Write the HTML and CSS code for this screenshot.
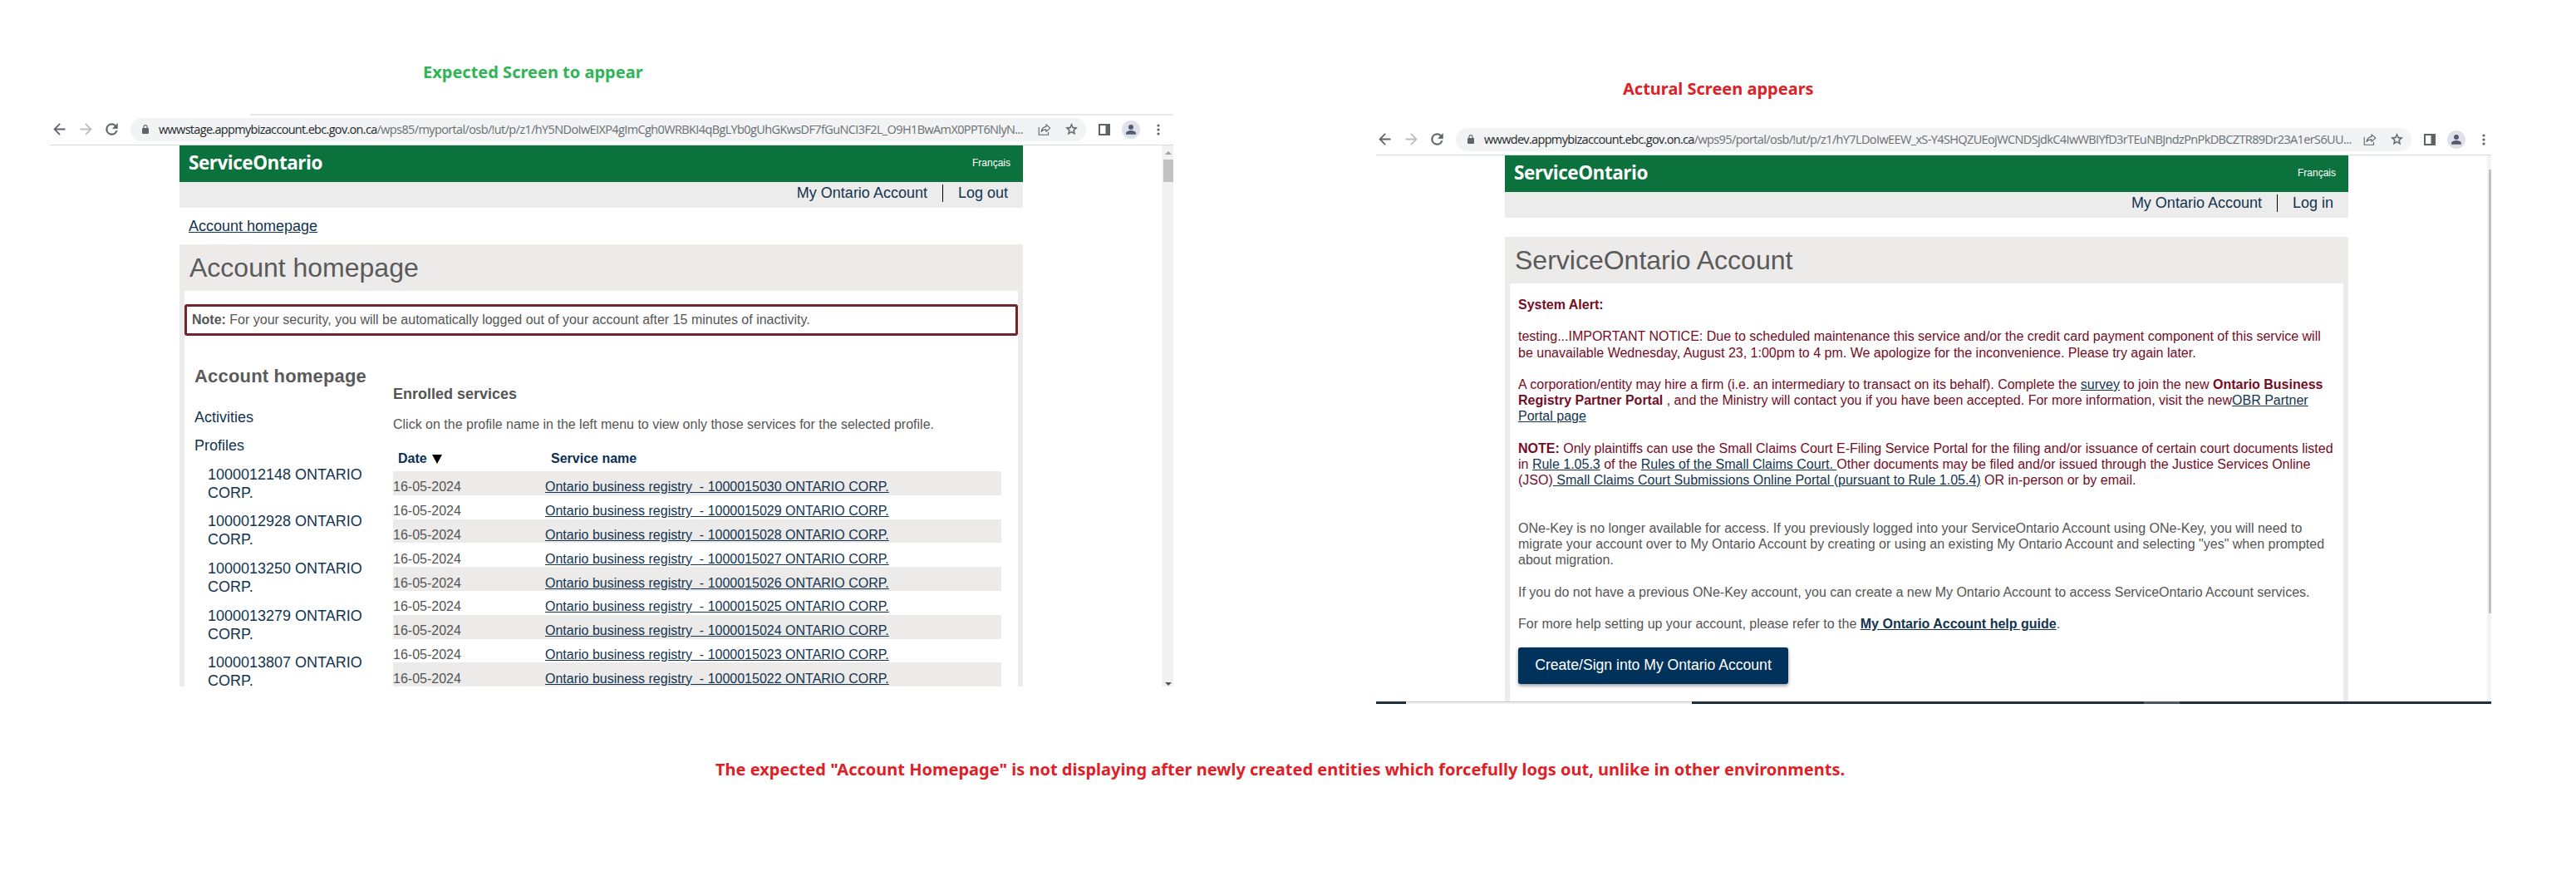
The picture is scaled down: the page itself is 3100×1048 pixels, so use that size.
FILE: index.html
```html
<!DOCTYPE html>
<html lang="en">
<head>
<meta charset="utf-8">
<title>Account homepage comparison</title>
<link rel="stylesheet" href="styles.css">
</head>
<body>
<svg class="defs" width="0" height="0">
  <symbol id="back" viewBox="0 0 24 24"><path d="M20 10.8H7.83l5.59-5.59L12 3.8l-8.2 8.2 8.2 8.2 1.41-1.41L7.83 13.2H20z"/></symbol>
  <symbol id="forward" viewBox="0 0 24 24"><path d="M12 3.8l-1.41 1.41 5.58 5.59H4v2.4h12.17l-5.58 5.59L12 20.2l8.2-8.2z"/></symbol>
  <symbol id="reload" viewBox="0 0 24 24"><path d="M17.65 6.35A7.96 7.96 0 0 0 12 4a8 8 0 1 0 7.73 10h-2.08A6 6 0 1 1 12 6c1.66 0 3.14.69 4.22 1.78L13 11h7V4z" stroke="#5f6368" stroke-width=".5"/></symbol>
  <symbol id="lock" viewBox="0 0 8 11"><path d="M1 4h6a1 1 0 0 1 1 1v5a1 1 0 0 1-1 1H1a1 1 0 0 1-1-1V5a1 1 0 0 1 1-1z"/><path d="M2 4.5V2.6a2 2 0 0 1 4 0v1.9" fill="none" stroke="#5f6368" stroke-width="1.1"/></symbol>
  <symbol id="share" viewBox="0 0 16 16"><g fill="none" stroke="#5f6368" stroke-width="1.1"><path d="M1.2 5v9.3h11.3v-3.2"/><path d="M10 1.8l4.8 4.4L10 10.4V7.9c-2.600 0-4.600.8-6 2.600.6-3.300 2.500-5.600 6-6.100z" stroke-linejoin="round"/></g></symbol>
  <symbol id="star" viewBox="0 0 24 24"><path d="M22 9.240l-7.190-.62L12 2 9.190 8.630 2 9.240l5.460 4.730L5.820 21 12 17.270 18.180 21l-1.630-7.030zM12 15.400l-3.760 2.270 1-4.280-3.320-2.880 4.380-.38L12 6.100l1.710 4.040 4.380.38-3.320 2.880 1 4.280z" stroke="#5f6368" stroke-width=".5"/></symbol>
  <symbol id="side" viewBox="0 0 14 14"><path d="M0 0h14v14H0zM2 2v10h6.500V2z" fill-rule="evenodd"/></symbol>
  <symbol id="avatar" viewBox="0 0 22 22"><circle cx="11" cy="11" r="11" fill="#dee1e8"/><circle cx="11" cy="8" r="3"/><path d="M5 16.800v-1.500c0-2 3.500-3.300 6-3.300s6 1.300 6 3.300v1.500z"/></symbol>
  <symbol id="dots" viewBox="0 0 4 14"><circle cx="2" cy="2" r="1.600"/><circle cx="2" cy="7" r="1.600"/><circle cx="2" cy="12" r="1.600"/></symbol>
</svg>

<main class="board">
  <section class="shot">
    <h2 class="caption caption-expected">Expected Screen to appear</h2>
    <div class="window">
      <div class="toolbar">
        <div class="tab-edge"></div>
        <svg class="nav-back"><use href="#back"/></svg>
        <svg class="nav-forward"><use href="#forward"/></svg>
        <svg class="nav-reload"><use href="#reload"/></svg>
        <div class="omnibox">
          <svg class="lock"><use href="#lock"/></svg>
          <div class="url"><span class="host host-stage">wwwstage.appmybizaccount.ebc.gov.on.ca</span><span class="path-stage">/wps85/myportal/osb/!ut/p/z1/hY5NDoIwEIXP4gImCgh0WRBKI4qBgLYb0gUhGKwsDF7fGuNCI3F2L_O9H1BwAmX0PPT6NlyN...</span></div>
          <svg class="share"><use href="#share"/></svg>
          <svg class="star"><use href="#star"/></svg>
        </div>
        <svg class="side"><use href="#side"/></svg>
        <svg class="avatar"><use href="#avatar"/></svg>
        <svg class="dots"><use href="#dots"/></svg>
      </div>
      <div class="viewport">
        <div class="site">
          <header class="brand"><span class="logo">ServiceOntario</span><a class="lang">Français</a></header>
          <nav class="account-nav"><a>My Ontario Account</a><i></i><a>Log out</a></nav>
          <div class="crumbs"><a>Account homepage</a></div>
          <h1 class="title">Account homepage</h1>
          <div class="content content-home">
            <p class="note"><b>Note:</b> For your security, you will be automatically logged out of your account after 15 minutes of inactivity.</p>
            <div class="columns">
              <aside class="menu">
                <h2>Account homepage</h2>
                <a>Activities</a>
                <a>Profiles</a>
                <a class="sub">1000012148 ONTARIO<br>CORP.</a>
                <a class="sub">1000012928 ONTARIO<br>CORP.</a>
                <a class="sub">1000013250 ONTARIO<br>CORP.</a>
                <a class="sub">1000013279 ONTARIO<br>CORP.</a>
                <a class="sub">1000013807 ONTARIO<br>CORP.</a>
              </aside>
              <div class="services">
                <h3>Enrolled services</h3>
                <p>Click on the profile name in the left menu to view only those services for the selected profile.</p>
                <div class="head"><span class="sort">Date <i></i></span><span>Service name</span></div>
                <div class="row"><span>16-05-2024</span><a>Ontario business registry&nbsp; - 1000015030 ONTARIO CORP.</a></div>
                <div class="row"><span>16-05-2024</span><a>Ontario business registry&nbsp; - 1000015029 ONTARIO CORP.</a></div>
                <div class="row"><span>16-05-2024</span><a>Ontario business registry&nbsp; - 1000015028 ONTARIO CORP.</a></div>
                <div class="row"><span>16-05-2024</span><a>Ontario business registry&nbsp; - 1000015027 ONTARIO CORP.</a></div>
                <div class="row"><span>16-05-2024</span><a>Ontario business registry&nbsp; - 1000015026 ONTARIO CORP.</a></div>
                <div class="row"><span>16-05-2024</span><a>Ontario business registry&nbsp; - 1000015025 ONTARIO CORP.</a></div>
                <div class="row"><span>16-05-2024</span><a>Ontario business registry&nbsp; - 1000015024 ONTARIO CORP.</a></div>
                <div class="row"><span>16-05-2024</span><a>Ontario business registry&nbsp; - 1000015023 ONTARIO CORP.</a></div>
                <div class="row"><span>16-05-2024</span><a>Ontario business registry&nbsp; - 1000015022 ONTARIO CORP.</a></div>
              </div>
            </div>
          </div>
        </div>
        <div class="scrollbar"><i class="up"></i><i class="thumb"></i><i class="down"></i></div>
      </div>
    </div>
  </section>

  <section class="shot shot-actual">
    <h2 class="caption caption-actual">Actural Screen appears</h2>
    <div class="window">
      <div class="toolbar">
        <svg class="nav-back"><use href="#back"/></svg>
        <svg class="nav-forward"><use href="#forward"/></svg>
        <svg class="nav-reload"><use href="#reload"/></svg>
        <div class="omnibox">
          <svg class="lock"><use href="#lock"/></svg>
          <div class="url"><span class="host host-dev">wwwdev.appmybizaccount.ebc.gov.on.ca</span><span class="path-dev">/wps95/portal/osb/!ut/p/z1/hY7LDoIwEEW_xS-Y4SHQZUEojWCNDSjdkC4IwWBIYfD3rTEuNBJndzPnPkDBCZTR89Dr23A1erS6UU...</span></div>
          <svg class="share"><use href="#share"/></svg>
          <svg class="star"><use href="#star"/></svg>
        </div>
        <svg class="side"><use href="#side"/></svg>
        <svg class="avatar"><use href="#avatar"/></svg>
        <svg class="dots"><use href="#dots"/></svg>
      </div>
      <div class="viewport">
        <div class="site">
          <header class="brand"><span class="logo">ServiceOntario</span><a class="lang">Français</a></header>
          <nav class="account-nav"><a>My Ontario Account</a><i></i><a>Log in</a></nav>
          <div class="spacer"></div>
          <h1 class="title">ServiceOntario Account</h1>
          <div class="content content-login">
            <div class="alert">
              <p><b>System Alert:</b></p>
              <p>testing...IMPORTANT NOTICE: Due to scheduled maintenance this service and/or the credit card payment component of this service will<br>be unavailable Wednesday, August 23, 1:00pm to 4 pm. We apologize for the inconvenience. Please try again later.</p>
              <p>A corporation/entity may hire a firm (i.e. an intermediary to transact on its behalf). Complete the <a>survey</a> to join the new <b>Ontario Business<br>Registry Partner Portal</b> , and the Ministry will contact you if you have been accepted. For more information, visit the new<a>OBR Partner<br>Portal page</a></p>
              <p><b>NOTE:</b> Only plaintiffs can use the Small Claims Court E-Filing Service Portal for the filing and/or issuance of certain court documents listed<br>in <a>Rule 1.05.3</a> of the <a>Rules of the Small Claims Court.&nbsp;</a>Other documents may be filed and/or issued through the Justice Services Online<br>(JSO)<a>&nbsp;Small Claims Court Submissions Online Portal (pursuant to Rule 1.05.4)</a> OR in-person or by email.</p>
            </div>
            <p>ONe-Key is no longer available for access. If you previously logged into your ServiceOntario Account using ONe-Key, you will need to<br>migrate your account over to My Ontario Account by creating or using an existing My Ontario Account and selecting "yes" when prompted<br>about migration.</p>
            <p>If you do not have a previous ONe-Key account, you can create a new My Ontario Account to access ServiceOntario Account services.</p>
            <p>For more help setting up your account, please refer to the <a><b>My Ontario Account help guide</b></a>.</p>
            <button class="signin">Create/Sign into My Ontario Account</button>
          </div>
        </div>
        <div class="scrollbar"><i class="thumb"></i></div>
      </div>
      <div class="taskbar"><i class="search"></i><i class="active"></i></div>
    </div>
  </section>
</main>
<p class="summary">The expected "Account Homepage" is not displaying after newly created entities which forcefully logs out, unlike in other environments.</p>
</body>
</html>
```
FILE: styles.css
```css
* { box-sizing: border-box; margin: 0; padding: 0; }
body { width: 3100px; height: 1048px; overflow: hidden; background: #fff; font-family: "Liberation Sans", Arial, sans-serif; color: #555; }
svg { flex: none; fill: #5f6368; }
.defs { display: block; height: 0; }
i { font-style: normal; }

.board { display: grid; grid-template-columns: 1352px 1342px; column-gap: 244px; padding-left: 60px; height: 847px; }
.shot { display: flex; flex-direction: column; overflow: hidden; }
.caption, .summary { font-family: "Noto Sans", "Open Sans", sans-serif; font-weight: 700; font-size: 20px; line-height: 26px; white-space: nowrap; }
.caption-expected { padding: 74px 0 0 449px; height: 137px; color: #2fb457; }
.caption-actual { padding: 94px 0 0 297px; height: 149px; color: #de2027; }
.summary { color: #de2027; padding: 66px 0 0 861px; }

.window { width: 1352px; height: 689px; overflow: hidden; flex: none; display: flex; flex-direction: column; }
.shot-actual .window { width: 1342px; height: 698px; }

/* browser toolbar */
.toolbar { position: relative; width: 1352px; height: 38px; flex: none; display: flex; align-items: center; border-bottom: 1px solid #d6d8da; }
.shot-actual .toolbar { width: 1353px; margin-left: -1px; }
.tab-edge { position: absolute; top: 0; left: 241px; right: 0; height: 2px; background: #e8e8e8; }
.nav-back { width: 21px; height: 21px; margin-left: 1px; }
.nav-forward { width: 21px; height: 21px; margin-left: 11px; fill: #bbbdbf; }
.nav-reload { width: 21px; height: 21px; margin-left: 10px; }
.omnibox { width: 1150px; height: 28px; margin-left: 12px; border-radius: 14px; background: #f1f3f4; display: flex; align-items: center; padding-left: 14px; }
.lock { width: 8px; height: 11px; }
.url { width: 1058px; padding-left: 12px; font: 14.5px/20px "Open Sans", sans-serif; color: #6b6f73; white-space: nowrap; }
.host { color: #26282b; }
.host-stage { letter-spacing: -.69px; }
.path-stage { letter-spacing: -.62px; }
.host-dev { letter-spacing: -.67px; }
.path-dev { letter-spacing: -.62px; }
.share { width: 16px; height: 16px; margin-left: 12px; }
.star { width: 17px; height: 17px; margin-left: 16px; }
.side { width: 14px; height: 14px; margin-left: 15px; }
.avatar { width: 22px; height: 22px; margin-left: 14px; fill: #545d70; }
.dots { width: 4px; height: 14px; margin-left: 20px; }

/* page */
.viewport { flex: 1; min-height: 0; display: flex; justify-content: space-between; overflow: hidden; padding-left: 156px; }
.shot-actual .viewport { padding-left: 155px; }
.site { width: 1015px; display: flex; flex-direction: column; }
.brand { height: 44px; flex: none; background: #0c723d; color: #fff; display: flex; justify-content: space-between; align-items: center; padding: 0 15px 2px 11px; }
.logo { font: 700 22.5px/30px "Open Sans", sans-serif; letter-spacing: -.47px; }
.lang { font-size: 12px; }
.account-nav { height: 31px; flex: none; background: #ececec; display: flex; justify-content: flex-end; padding: 3px 18px 0 0; font-size: 18px; line-height: 20px; color: #13344f; }
.account-nav i { width: 1px; height: 21px; margin: 0 18px; background: #000; }
.crumbs { height: 44px; flex: none; padding: 11px; font-size: 18px; line-height: 22px; color: #13344f; text-decoration: underline; }
.spacer { height: 23px; flex: none; }
.title { height: 56px; flex: none; background: #ecebea; padding: 10px 12px; font-size: 32px; line-height: 36px; font-weight: 400; color: #5a5a5a; }
.content { flex: 1; border: solid #ecebeb; border-width: 0 6px; font-size: 16px; white-space: nowrap; }
.note { height: 38px; margin-top: 16px; border: 3px solid #70242e; border-radius: 3px; padding: 6px; line-height: 20px; }
.columns { display: grid; grid-template-columns: 239px 732px; padding: 37px 0 0 12px; }
.menu { display: flex; flex-direction: column; gap: 12.6px; font-size: 18px; line-height: 22px; color: #13344f; }
.menu h2 { font-size: 22px; line-height: 26px; letter-spacing: .18px; margin: -1px 0 12px; color: #5a5a5a; }
.menu .sub { padding-left: 16px; }
.services { padding-top: 22px; }
.services h3 { font-size: 18px; line-height: 22px; }
.services p { margin-top: 16px; line-height: 20px; }
.head { display: grid; grid-template-columns: 184px 1fr; padding: 0 0 5px 6px; margin-top: 21px; line-height: 20px; font-weight: 700; color: #0b2f52; }
.sort { display: flex; align-items: center; gap: 6px; }
.sort i { border: solid transparent; border-width: 11px 6px 0; border-top-color: #000; }
.row { display: grid; grid-template-columns: 183px 1fr; height: 28.8px; padding-top: 9.4px; line-height: 19.4px; }
.row:nth-of-type(even) { background: #ecebea; }
.row a, .content-login a { color: #13344f; text-decoration: underline; }

/* login page */
.content-login { padding: 16px 0 0 10px; line-height: 19.2px; }
.content-login p { margin-bottom: 19.2px; }
.alert { color: #750c25; margin-bottom: 38.4px; }
.signin { width: 325px; height: 44px; border: 0; border-radius: 3px; background: #00325b; color: #fff; font: 17.6px/20px "Liberation Sans", Arial, sans-serif; padding-bottom: 2px; box-shadow: 0 2px 4px rgba(0, 0, 0, .4); }

.scrollbar { width: 14px; background: #f1f1f1; display: flex; flex-direction: column; padding: 7px 0 1px 2px; }
.shot-actual .scrollbar { width: 5px; padding-top: 17px; background: #f3f3f3; }
.thumb { height: 27px; background: #c1c1c1; margin-top: 6px; }
.shot-actual .thumb { height: 534px; margin-top: 0; }
.shot-actual .scrollbar .thumb { flex: none; }
.up { border: solid transparent; border-width: 0 4px 4px; border-bottom-color: #a0a0a0; align-self: center; }
.down { border: solid transparent; border-width: 4px 4px 0; border-top-color: #505050; align-self: center; margin-top: auto; }

.taskbar { height: 3px; flex: none; background: #1f2f3d; display: flex; }
.search { width: 344px; margin-left: 36px; background: #f2f2f2; border-top: 1px solid #c4c4c4; }
.active { width: 43px; margin-left: 544px; background: #4c5763; }
```
